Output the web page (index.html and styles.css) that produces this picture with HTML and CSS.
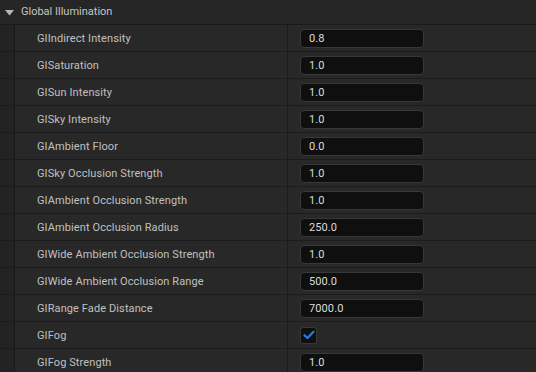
FILE: index.html
```html
<!DOCTYPE html>
<html>
<head>
<meta charset="utf-8">
<link rel="stylesheet" href="styles.css">
</head>
<body>
<div class="panel">
  <div class="header">
    <svg class="arrow" width="9" height="6" viewBox="0 0 9 6"><path d="M0 0 H9 L4.5 5.5 Z" fill="#b8b8b8"/></svg>
    <span class="title">Global Illumination</span>
  </div>
  <div class="rows">
    <div class="row"><div class="indent"></div><div class="name">GIIndirect Intensity</div><div class="val"><div class="input">0.8</div></div></div>
    <div class="row"><div class="indent"></div><div class="name">GISaturation</div><div class="val"><div class="input">1.0</div></div></div>
    <div class="row"><div class="indent"></div><div class="name">GISun Intensity</div><div class="val"><div class="input">1.0</div></div></div>
    <div class="row"><div class="indent"></div><div class="name">GISky Intensity</div><div class="val"><div class="input">1.0</div></div></div>
    <div class="row"><div class="indent"></div><div class="name">GIAmbient Floor</div><div class="val"><div class="input">0.0</div></div></div>
    <div class="row"><div class="indent"></div><div class="name">GISky Occlusion Strength</div><div class="val"><div class="input">1.0</div></div></div>
    <div class="row"><div class="indent"></div><div class="name">GIAmbient Occlusion Strength</div><div class="val"><div class="input">1.0</div></div></div>
    <div class="row"><div class="indent"></div><div class="name">GIAmbient Occlusion Radius</div><div class="val"><div class="input">250.0</div></div></div>
    <div class="row"><div class="indent"></div><div class="name">GIWide Ambient Occlusion Strength</div><div class="val"><div class="input">1.0</div></div></div>
    <div class="row"><div class="indent"></div><div class="name">GIWide Ambient Occlusion Range</div><div class="val"><div class="input">500.0</div></div></div>
    <div class="row"><div class="indent"></div><div class="name">GIRange Fade Distance</div><div class="val"><div class="input">7000.0</div></div></div>
    <div class="row"><div class="indent"></div><div class="name">GIFog</div><div class="val"><div class="check"><svg width="12" height="10" viewBox="0 0 12 10"><path d="M1.5 5.2 L4.5 8 L10.5 1.8" fill="none" stroke="#1f7fe6" stroke-width="2.2" stroke-linecap="round" stroke-linejoin="round"/></svg></div></div></div>
    <div class="row"><div class="indent"></div><div class="name">GIFog Strength</div><div class="val"><div class="input">1.0</div></div></div>
  </div>
</div>
</body>
</html>
```

FILE: styles.css
```css
html, body {
  margin: 0;
  padding: 0;
  background: #1f1f1f;
}
body {
  width: 536px;
  height: 372px;
  overflow: hidden;
  font-family: Roboto, "Noto Sans", sans-serif;
  font-size: 11px;
}
.panel {
  display: flex;
  flex-direction: column;
}
.header {
  height: 25px;
  box-sizing: border-box;
  background: #262626;
  border-bottom: 1px solid #1a1a1a;
  display: flex;
  align-items: center;
  padding-left: 5px;
  color: #c4c4c4;
}
.arrow {
  margin-right: 7px;
  margin-top: 1px;
}
.title {
  margin-top: -2px;
}
.rows {
  display: flex;
  flex-direction: column;
}
.row {
  height: 27px;
  box-sizing: border-box;
  border-bottom: 1px solid #1c1c1c;
  display: flex;
}
.indent {
  width: 14px;
  background: #232323;
  border-right: 1px solid #191919;
}
.name {
  width: 273px;
  background: #282828;
  border-right: 1px solid #1c1c1c;
  color: #c0c0c0;
  display: flex;
  align-items: center;
  padding-left: 22px;
  box-sizing: border-box;
  letter-spacing: 0.1px;
}
.val {
  flex: 1;
  background: #282828;
  display: flex;
  align-items: center;
  padding-left: 12px;
}
.input {
  width: 124px;
  height: 19px;
  box-sizing: border-box;
  background: #0f0f0f;
  border: 1px solid #383838;
  border-radius: 4px;
  color: #dcdcdc;
  display: flex;
  align-items: center;
  padding-left: 8px;
  letter-spacing: 0.1px;
}
.check {
  width: 17px;
  height: 17px;
  box-sizing: border-box;
  background: #0f0f0f;
  border: 1px solid #383838;
  border-radius: 3px;
  display: flex;
  align-items: center;
  justify-content: center;
}
```
